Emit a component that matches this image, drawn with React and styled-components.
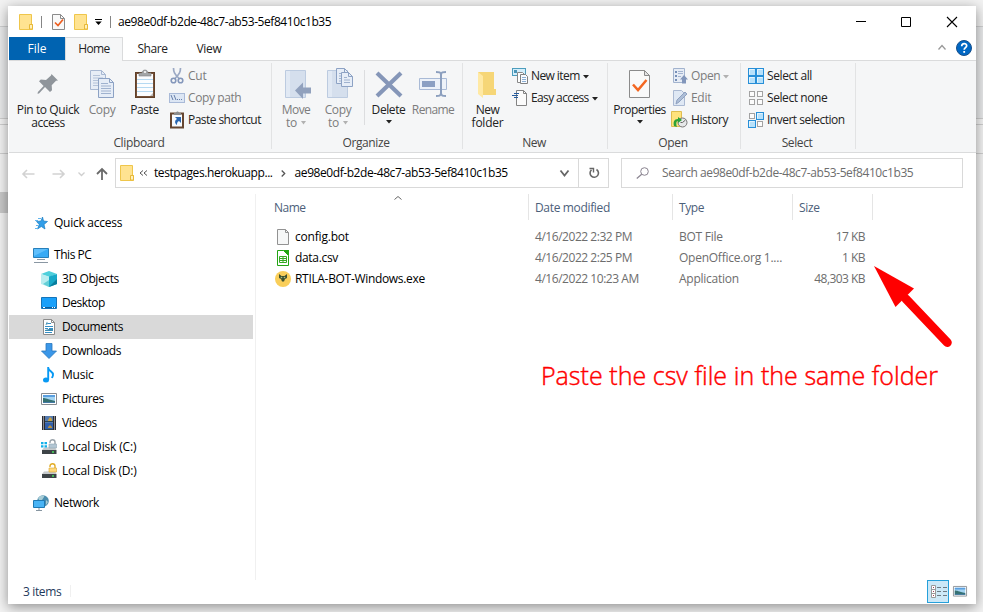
import React from 'react';
import styled, { createGlobalStyle } from 'styled-components';

const GlobalStyle = createGlobalStyle`
  *, *::before, *::after { box-sizing: border-box; }
  html, body { margin: 0; padding: 0; overflow: hidden; }
  body { font-family: "Open Sans", "Noto Sans", sans-serif; font-size: 12px; line-height: 13px; color: #000; }
  svg { display: block; flex: none; overflow: visible; }
`;

/* ---------- frame ---------- */
const Desktop = styled.div`
  width: 983px;
  height: 612px;
  padding: 6px 7px 8px 8px;
  overflow: hidden;
  background:
    linear-gradient(#c9c9c9, #c9c9c9) 0 192px / 8px 21px no-repeat,
    linear-gradient(#f2f2f2 0 26px, #cfd0d1 26px 27px, #e9eaeb 27px 118px, #cfcfcf 118px 119px,
      #f4f4f4 119px 124px, #cfcfcf 124px 125px, #f3f3f3 125px 153px, #cfcfcf 153px 154px, #f3f3f3 154px);
`;
const Window = styled.div`
  width: 968px;
  height: 598px;
  padding-left: 1px;
  display: flex;
  flex-direction: column;
  background: #fff;
  box-shadow: 0 3px 12px rgba(0, 0, 0, 0.42);
`;
const Text = styled.span`
  white-space: nowrap;
  letter-spacing: ${(p) => p.$ls ?? -0.36}px;
`;

/* ---------- title bar ---------- */
const TitleBar = styled.header`
  height: 31px;
  display: flex;
  align-items: center;
`;
const QuickTools = styled.div`
  width: 109px;
  height: 31px;
  padding-left: 8px;
  display: flex;
  align-items: center;
`;
const ToolSlot = styled.div`
  width: ${(p) => p.$w}px;
  display: flex;
  justify-content: center;
`;
const Bar = styled.i`
  width: 1px;
  height: 12px;
  background: #858585;
`;
const WindowButtons = styled.div`
  margin-left: auto;
  display: flex;
`;
const WindowButton = styled.button`
  width: ${(p) => p.$w ?? 46}px;
  height: 30px;
  padding: 0;
  border: 0;
  background: none;
  display: flex;
  align-items: center;
  justify-content: center;
`;

/* ---------- tabs ---------- */
const Tabs = styled.nav`
  height: 24px;
  display: flex;
  border-bottom: 1px solid #dadbdc;
`;
const Tab = styled.div`
  width: ${(p) => p.$w}px;
  height: ${(p) => (p.$active ? 24 : 23)}px;
  display: flex;
  align-items: center;
  justify-content: center;
  padding-bottom: ${(p) => (p.$active ? 2 : 0)}px;
  color: ${(p) => (p.$file ? '#fff' : '#222')};
  background: ${(p) => (p.$file ? '#0063b1' : p.$active ? '#f5f6f7' : 'transparent')};
  border: ${(p) => (p.$active ? '1px solid #dadbdc' : '0')};
  border-bottom: 0;
`;
const TabTools = styled.div`
  margin-left: auto;
  padding: 0 4px 2px 0;
  display: flex;
  align-items: center;
  gap: 10px;
`;

/* ---------- ribbon ---------- */
const Ribbon = styled.section`
  height: 92px;
  display: flex;
  background: #f5f6f7;
  border-bottom: 1px solid #dadbdc;
`;
const Group = styled.div`
  width: ${(p) => p.$w}px;
  display: flex;
  flex-direction: column;
  background: linear-gradient(#e2e3e4, #e2e3e4) right 2px / 1px 86px no-repeat;
`;
const GroupBody = styled.div`
  height: 75px;
  padding-left: ${(p) => p.$pad}px;
  display: flex;
`;
const GroupLabel = styled.div`
  height: 14px;
  padding-right: 3px;
  text-align: center;
  color: #444;
`;
const BigButtonBox = styled.div`
  width: ${(p) => p.$w}px;
  padding-top: 8px;
  display: flex;
  flex-direction: column;
  align-items: center;
  text-align: center;
  color: ${(p) => (p.$off ? '#7c7c7c' : '#222')};
  svg:first-child { margin-bottom: 2px; }
`;
const Line = styled.div`
  height: 13px;
  display: flex;
  align-items: center;
  gap: 4px;
`;
const SmallColumn = styled.div`
  padding: 4px 0 0 ${(p) => p.$pad}px;
  display: flex;
  flex-direction: column;
`;
const SmallButton = styled.div`
  height: 22px;
  display: flex;
  align-items: center;
  gap: ${(p) => p.$gap ?? 3}px;
  color: ${(p) => (p.$off ? '#7c7c7c' : '#222')};
  ${Text} { padding-bottom: 1px; }
`;
const InnerDivider = styled.i`
  width: 1px;
  height: 55px;
  margin: 9px 2px 0 5px;
  background: #dcdddf;
`;

/* ---------- address row ---------- */
const NavRow = styled.div`
  height: 41px;
  padding: 5px 0 0 13px;
  display: flex;
`;
const NavArrows = styled.div`
  width: 93px;
  height: 31px;
  display: grid;
  grid-template-columns: 16px 14px 16px 10px 8px 10px 12px;
  align-items: center;
`;
const Address = styled.div`
  width: 494px;
  height: 30px;
  display: flex;
  align-items: center;
  border: 1px solid #d9d9d9;
`;
const Crumb = styled.div`
  display: flex;
  align-items: center;
  padding-left: ${(p) => p.$pad}px;
  ${Text} { padding-bottom: 1px; }
`;
const AddressEnd = styled.div`
  margin-left: auto;
  height: 28px;
  display: flex;
  align-items: center;
`;
const Refresh = styled.div`
  width: 30px;
  height: 28px;
  margin-left: 9px;
  border-left: 1px solid #d9d9d9;
  display: flex;
  align-items: center;
  justify-content: center;
`;
const Search = styled.div`
  width: 342px;
  height: 30px;
  margin-left: 12px;
  padding-left: 14px;
  display: flex;
  align-items: center;
  gap: 13px;
  border: 1px solid #d9d9d9;
  color: #6d6d6d;
  ${Text} { padding-bottom: 1px; }
`;

/* ---------- content ---------- */
const Main = styled.div`
  height: 386px;
  display: flex;
`;
const Sidebar = styled.aside`
  width: 247px;
  padding-top: 17px;
  border-right: 1px solid #f0f0f0;
`;
const TreeItem = styled.div`
  width: 244px;
  height: 24px;
  margin-top: ${(p) => p.$gap ?? 0}px;
  padding-left: ${(p) => (p.$root ? 24 : 32)}px;
  display: flex;
  align-items: center;
  gap: 5px;
  background: ${(p) => (p.$active ? '#d9d9d9' : 'transparent')};
  ${Text} { padding-bottom: 1px; }
`;
const Files = styled.main`
  flex: 1;
`;
const HeaderRow = styled.div`
  height: 32px;
  display: flex;
  color: #4c607a;
`;
const HeaderCell = styled.div`
  width: ${(p) => p.$w}px;
  height: 26px;
  padding-left: ${(p) => p.$pad}px;
  padding-top: 1px;
  display: flex;
  align-items: center;
  border-right: 1px solid #e5e5e5;
`;
const SortMark = styled.span`
  margin: -20px 0 0 88px;
`;
const FileRow = styled.div`
  height: 21px;
  display: grid;
  grid-template-columns: 39px 240px 144px 115px 71px;
  align-items: center;
  color: #6d6d6d;
`;
const FileIcon = styled.span`
  padding-left: 19px;
`;
const FileName = styled.span`
  color: #000;
`;
const Size = styled.span`
  text-align: right;
`;
const Note = styled.div`
  height: 132px;
  margin-top: -23px;
  display: grid;
  grid-template-columns: 618px 1fr;
  align-items: start;
`;
const NoteText = styled.div`
  margin: 94px 0 0 285px;
  width: 400px;
  font-size: 25px;
  line-height: 30px;
  font-weight: 300;
  word-spacing: 0.2px;
  color: #f00;
  -webkit-text-stroke: 0.45px #f00;
  white-space: nowrap;
`;
const StatusBar = styled.footer`
  height: 24px;
  padding: 0 9px 2px 14px;
  display: flex;
  align-items: center;
  color: #1e395b;
`;
const StatusCount = styled.div`
  width: 48px;
  height: 12px;
  line-height: 14px;
  border-right: 1px solid #f0f0f0;
`;
const Views = styled.div`
  margin-left: auto;
  display: flex;
  align-items: center;
  gap: 4px;
`;
const ViewActive = styled.div`
  width: 22px;
  height: 23px;
  padding: 4px 0 0 3px;
  background: #cce8f7;
  border: 1px solid #26a0da;
`;

/* ---------- icons ---------- */
const Svg = ({ w = 16, h = w, children, ...rest }) => (
  <svg width={w} height={h} viewBox={`0 0 ${w} ${h}`} fill="none" {...rest}>{children}</svg>
);
const Folder = () => (
  <Svg w={14} h={16}>
    <path d="M.5.5h12v10h1v5H.5z" fill="#ffe391" stroke="#efc64b" />
    <path d="M10.500 15v-4.500h3V15z" fill="#fff0bd" stroke="#e8b938" />
  </Svg>
);
const Caret = ({ color = '#222', w = 6 }) => (
  <Svg w={w} h={3}><path d={`M0 0h${w}L${w / 2} 3.500z`} fill={color} /></Svg>
);
const CheckDoc = () => (
  <Svg w={13} h={16}>
    <path d="M.5.5h8l4 4v11H.5z" fill="#f9f9f9" stroke="#8b8b8b" />
    <path d="M8.500.5v4h4" stroke="#8b8b8b" />
    <path d="m3 8.500 3 3 5-6" stroke="#ed5f20" strokeWidth="1.700" />
  </Svg>
);
const Customize = () => (
  <Svg w={7} h={6}><path d="M0 .5h7" stroke="#000" /><path d="M.3 2.500h6.400L3.500 6z" fill="#000" /></Svg>
);
const Pin = () => (
  <Svg w={32}>
    <path transform="translate(1)" d="M18.500 5 25 11.500l-2 .2-4.300 4.500.3 5-2 1.800-5-5L6 24.500l-1.500.3.400-1.700 5.700-6-4.600-4.800 1.800-1.800 5.200.4L18 6.500z" fill="#8f959b" />
  </Svg>
);
const PageShape = ({ x, y, w = 15, h = 19, c = '#8da2c4', f = '#e6edf7' }) => (
  <g transform={`translate(${x} ${y})`}>
    <path d={`M.5.5h${w - 5}l4 4v${h - 5}H.5z`} fill={f} stroke={c} />
    <path d={`M${w - 4.5}.5v4h4`} stroke={c} />
    {Array.from({ length: Math.floor((h - 6) / 2.5) }, (_, i) => (
      <path key={i} d={`M3 ${5.5 + i * 2.5}h${i ? w - 6 : w - 9}`} stroke={c} strokeWidth=".8" />
    ))}
  </g>
);
const CopyIcon = () => (
  <Svg w={32}><PageShape x={4} y={1} w={16} h={20} c="#a8b8d2" f="#e7edf6" /><PageShape x={12} y={9} w={16} h={20} /></Svg>
);
const PasteIcon = () => (
  <Svg w={32}>
    <rect x="6.500" y="3.500" width="19" height="25" fill="#755138" stroke="#604029" />
    <path d="M8 5h16v22H8z" fill="#fbfdff" />
    <path d="M8 10.500h16M8 14.500h16M8 18.500h16M8 22.500h16" stroke="#b5d9f2" />
    <path d="M21 27h3v-3z" fill="#bbb" />
    <path d="M10 7V4h3c0-4 6-4 6 0h3v3z" fill="#a3a5a7" stroke="#7f8183" strokeWidth=".6" />
    <circle cx="16" cy="3" r="1" fill="#fff" />
  </Svg>
);
const Cut = () => (
  <Svg>
    <path d="M4.500 0c0 4 1 6 6 11M11.500 0c0 4-1 6-6 11" stroke="#9ba9c4" strokeWidth="1.700" />
    <circle cx="4.500" cy="12.500" r="2.300" stroke="#8497bb" strokeWidth="1.600" />
    <circle cx="11.500" cy="12.500" r="2.300" stroke="#8497bb" strokeWidth="1.600" />
  </Svg>
);
const CopyPath = () => (
  <Svg>
    <rect x=".5" y="3.500" width="15" height="9" fill="#dce6f4" stroke="#a9bad8" />
    <path d="m2 5 2 5m1-5 2 5" stroke="#657eaa" />
    <path d="M8 9.500h1m1 0h1m1 0h1" stroke="#657eaa" />
  </Svg>
);
const PasteShortcut = () => (
  <Svg>
    <path d="M2 1.500h12v14H2z" fill="#f8fbfe" stroke="#664631" strokeWidth="2" />
    <path d="M5 3V1h2c0-2 3-2 3 0h2v2z" fill="#8a8c8e" />
    <path d="M6 5h6v6l-2-2c-2 1-2 2-2 4-3-2-2-5 0-6z" fill="#2a66b0" />
  </Svg>
);
const BoxTo = ({ copy }) => (
  <Svg w={32}>
    <path d="M5.500 1.500h20v27h-20z" fill="#d5dfed" stroke="#bccbe0" />
    <path d="M6 2h4v26H6z" fill="#e1e9f4" />
    {copy
      ? <><PageShape x={14} y={-1} w={13} h={16} /><PageShape x={19} y={3} w={12} h={15} /></>
      : <path d="m15 21.500 8-8v5h8v6h-8v5.500z" fill="#91a1bd" />}
  </Svg>
);
const DeleteIcon = () => (
  <Svg w={32}><path d="m4 4 24 23M28 4 4 27" stroke="#8596b8" strokeWidth="4.200" /></Svg>
);
const RenameIcon = () => (
  <Svg w={32}>
    <path d="M2.500 9.500h27v11h-27z" fill="#edf2f9" stroke="#a9bad6" />
    <path d="M5 12h13v6H5z" fill="#8ca0c3" />
    <path d="M24 4v22M19 3c3 0 5 0 5 3 0-3 2-3 5-3M19 27c3 0 5 0 5-3 0 3 2 3 5 3" stroke="#8c9fbe" strokeWidth="2" />
  </Svg>
);
const NewFolder = () => (
  <Svg w={32}>
    <path d="M6 3h16v17h2v6H11z" fill="#f6d677" />
    <path d="m6 3 5 4v22l-5-4z" fill="#ffe9a4" />
  </Svg>
);
const NewItem = () => (
  <Svg>
    <rect x=".5" y=".5" width="13" height="7" fill="#d4eefb" stroke="#4c9dbd" />
    <path d="M2 2h3v3H2z" fill="#4b94b6" />
    <path d="M5.500 4.500h5l3 3v7h-8z" fill="#fff" stroke="#888" />
    <path d="M8.500 6.500h5l2 2v7h-7z" fill="#f8fbff" stroke="#808080" />
    <path d="M10 9.500h4m-4 2h4m-4 2h4" stroke="#8aaed3" />
  </Svg>
);
const EasyAccess = () => (
  <Svg>
    <path d="M4.500.5h7l3 3v12h-10z" fill="#fbfbfb" stroke="#838383" />
    <path d="M11.500.5v3h3" stroke="#838383" />
    <path d="M2 3.500h5M0 5.500h6M2 7.500h4" stroke="#255b9c" />
  </Svg>
);
const Properties = () => (
  <Svg w={32}>
    <path d="M5.500 1.500h15l5 5v22h-20z" fill="#f9f9f9" stroke="#8b8b8b" />
    <path d="M20.500 1.500v5h5z" fill="#e3e3e3" stroke="#8b8b8b" />
    <path d="m9 15.500 5 5.500 8.500-10" stroke="#f36621" strokeWidth="2.500" />
  </Svg>
);
const OpenIcon = () => (
  <Svg>
    <path d="M1.500.5h11v14h-11z" fill="#e6ecf5" stroke="#a2b3ce" />
    <path d="M3 3h2v2H3zm0 4h2v2H3zm0 4h2v2H3z" fill="#768fb7" />
    <path d="M6 3.500h5M6 5.500h5M6 8.500h3" stroke="#a4b4d0" />
    <path d="M10 15.500v-4H8l4-4.500 4 4.500h-2v4z" fill="#8296bb" />
  </Svg>
);
const EditIcon = () => (
  <Svg>
    <path d="M1.500.5h8l3 3v12h-11z" fill="#dfe8f4" stroke="#aab9d2" />
    <path d="m4 14 1-4 8-8 2 2-8 8z" fill="#adbed7" stroke="#8fa1c0" />
  </Svg>
);
const HistoryIcon = () => (
  <Svg>
    <path d="M.5.5h10v10h1v5H.5z" transform="translate(-1 -1)" fill="#ffe27d" stroke="#dfbd50" />
    <circle cx="10.500" cy="10.500" r="4.500" fill="#e6e8e9" stroke="#777" />
    <path d="M10.500 10.500l3-2.500m-3 2.500h-2" stroke="#666" />
    <path d="M2 14c-1-4 0-7 4-7V5l4 3-4 3V9c-2 0-2 3-1 6z" fill="#2ca338" />
  </Svg>
);
const Squares = ({ on }) => (
  <Svg>
    {[[0, 0], [8, 0], [0, 8], [8, 8]].map(([x, y], i) => on[i]
      ? <g key={i}><rect x={x + .5} y={y + .5} width="7" height="7" fill="#b8e1fa" stroke="#278fd8" /><path d={`M${x + 1.5} ${y + 6.5}v-5h5`} stroke="#e4f4fd" /></g>
      : <rect key={i} x={x + 1.5} y={y + 1.5} width="5" height="5" fill="#fcfcfc" stroke="#a2a2a2" />)}
  </Svg>
);
const Help = () => (
  <Svg>
    <circle cx="8" cy="8" r="7.500" fill="#0067c4" stroke="#174f8b" />
    <path d="M5.700 6.200c0-3.700 5-3.200 5-.5 0 1.800-2.500 2-2.500 4" stroke="#fff" strokeWidth="1.700" />
    <path d="M7.300 11h1.800v1.800H7.300z" fill="#fff" />
  </Svg>
);
const Chevron = ({ w = 8, h = 5, color = '#555', up, sw = 1.3 }) => (
  <Svg w={w} h={h}><path d={up ? `M.5 ${h - .5} ${w / 2} .5l${w / 2 - .5} ${h - 1}` : `M.5.5l${w / 2 - .5} ${h - 1} ${w / 2 - .5}-${h - 1}`} stroke={color} strokeWidth={sw} /></Svg>
);
const ArrowH = ({ right }) => (
  <Svg w={13} h={10} transform={right ? 'scale(-1 1)' : undefined}><path d="M12.500 5H1m4-4L1 5l4 4" stroke="#d2d2d2" strokeWidth="1.600" /></Svg>
);
const ArrowUp = () => (
  <Svg w={12} h={12}><path d="M6 12V1M1 6l5-5 5 5" stroke="#6a6a6a" strokeWidth="1.800" /></Svg>
);
const RefreshIcon = () => (
  <Svg w={12} h={12}><path d="M8.500 2.500a4.200 4.200 0 1 1-5 .4" stroke="#666" strokeWidth="1.600" /><path d="M1.500 1.500h4v4" stroke="#666" strokeWidth="1.400" /></Svg>
);
const SearchIcon = () => (
  <Svg w={13} h={12}><circle cx="8.500" cy="4.500" r="3.800" stroke="#8a8490" /><path d="M5.700 7.200.8 11.500" stroke="#8a8490" strokeWidth="1.200" /></Svg>
);
const Star = () => (
  <Svg>
    <path d="m9.500 2 1 4 4 .5-3.500 3 1 4.500-3.700-2.500L4.500 14l1.700-4.500-2.700-3L8 6z" fill="#329ee8" stroke="#187dc3" strokeWidth=".7" />
    <path d="M2 5.500h3M3 10.500h2M2 13.500h3M5 3.500h3" stroke="#62b5ee" />
  </Svg>
);
const PC = () => (
  <Svg>
    <path d="M.5 1.500h15v9H.5z" fill="#38aaf5" stroke="#277fba" />
    <path d="M1 2h14L1 9z" fill="#70c8ff" opacity=".7" />
    <path d="M4 12.500h8M1 15.500h14" stroke="#8a97a3" />
  </Svg>
);
const Cube = () => (
  <Svg>
    <path d="m0 3 8-3 8 3-8 3z" fill="#4ecfdb" /><path d="M0 3 8 5.500V16l-8-3z" fill="#b9edf0" />
    <path d="m8 5.500 8-2.500v10l-8 3z" fill="#18a9c8" /><path d="m8 16 8-3V8z" fill="#087d9d" /><path d="m2 13 6-4v7z" fill="#64cfd7" />
  </Svg>
);
const DesktopIcon = () => (
  <Svg><path d="M.5 2.500h15v11H.5z" fill="#19a0fa" stroke="#1474ba" /><path d="M1 12.500h14" stroke="#0b5d9c" /><path d="M2 12.500h2m7 0h1m1 0h1" stroke="#fff" /></Svg>
);
const DocIcon = () => (
  <Svg>
    <path d="M2.500.5h8l3 3v12h-11z" fill="#fff" stroke="#8b8b8b" /><path d="M10.500.5v3h3" stroke="#8b8b8b" />
    <path d="M4 7.500h8M4 9.500h3m1 0h4M4 13.500h7M7 4.500h3" stroke="#358fc5" /><path d="M4.500 6 6 2.500 7 5zM8 10h4v2H4v-1z" fill="#3a8ab0" />
  </Svg>
);
const Down = () => (
  <Svg><path d="M5 .5h6v7.500h4.500L8 15.500.5 8H5z" fill="#3b97e8" stroke="#2877bd" strokeWidth=".8" /></Svg>
);
const Music = () => (
  <Svg><ellipse cx="5" cy="13" rx="3" ry="2.500" fill="#0899f3" /><path d="M7.200 13V0M7.200 1c1 4 5 3 4.800 7-.1 1.400-.8 2-1 3" stroke="#0899f3" strokeWidth="1.900" /></Svg>
);
const Picture = ({ w = 16 }) => (
  <Svg w={w} h={w * .75}>
    <g transform={`scale(${w / 16})`}>
      <path d="M.5.5h15v11H.5z" fill="#fff" stroke="#878b90" /><path d="M2 2h12v8H2z" fill="#a4d4f2" />
      <path d="M2 2h12v2H2z" fill="#5a9fe0" /><path d="M2 5c3 0 4 1 12 3v2H2z" fill="#367172" /><path d="M2 9h12v1H2z" fill="#447aa5" />
    </g>
  </Svg>
);
const Video = () => (
  <Svg>
    <path d="M1 1h14v14H1z" fill="#2c2c31" /><path d="M4 1h8v7H4z" fill="#547aaf" /><path d="M4 8h8v7H4z" fill="#315fab" />
    <path d="m7 5 2-3 2 2v2H7z" fill="#c9a143" /><path d="m7 12 2-2 2 2v1H7z" fill="#b9923e" />
    <path d="M4 6.500h8M4 14.500h8" stroke="#2b4554" />
    <path d="M2.500 1.500V15M13.500 1.500V15" stroke="#eee" strokeDasharray="1 1" />
  </Svg>
);
const Disk = ({ win }) => (
  <Svg>
    <path d="m3 8.500 11-.5 1.500 3H1z" fill="#c6cacc" /><path d="M1 11h14.500v4H1z" fill="#3d4347" /><path d="M11 13h2" stroke="#48dd5b" strokeWidth="1.500" />
    {win && <path d="M0 3h2.500v2.300H0zm3.500 0H6v2.300H3.500zM0 6.300h2.500v2.300H0zm3.500 0H6v2.300H3.500z" fill="#13b0e9" />}
    <path d="M9 4V3c0-3 5-3 5 0v3" stroke={win ? '#9aa3aa' : '#e2ac25'} strokeWidth="1.400" />
    <path d="M8 5h7.500v4H8z" fill={win ? '#b3c6d3' : '#ffd97c'} stroke={win ? '#8fa5b4' : '#d9a431'} strokeWidth=".6" />
  </Svg>
);
const Network = () => (
  <Svg>
    <circle cx="10" cy="6" r="5.800" fill="#4b8dae" /><path d="M5 3c3-3 7-3 6-1L9 5H6zm8 2 2 2-2 3z" fill="#a7ccd6" />
    <path d="M.5 5.500h11v7H.5z" fill="#49b4f5" stroke="#1e79b3" /><path d="M3 15.500h6M6 13v2" stroke="#8796a1" />
  </Svg>
);
const BlankFile = () => (
  <Svg><path d="M2.500.5h8l3 3v12h-11z" fill="#f6f7f7" stroke="#929292" /><path d="M10.500.5v3h3" stroke="#929292" /></Svg>
);
const CsvFile = () => (
  <Svg>
    <path d="M2.500.5h6l5 5v10h-11z" fill="#fff" stroke="#23a514" /><path d="M8 0h6v6z" fill="#23a514" />
    <path d="M4.500 6.500h7v6h-7zM4.500 8.500h7m-7 2h7m-3.500-4v6" stroke="#36a823" />
  </Svg>
);
const BotFile = () => (
  <Svg><circle cx="8" cy="8" r="8" fill="#f9ce5a" /><path d="m4 3 2.500 2h3L12 3v4l-2 1-1 2.500H7L6 8 4 7z" fill="#3f512e" /><circle cx="6.500" cy="6.500" r=".8" fill="#a8bf8b" /><circle cx="9.500" cy="6.500" r=".8" fill="#a8bf8b" /></Svg>
);
const DetailsView = () => (
  <Svg w={16} h={13}>
    <path d="M.5.500h4v12h-4zM.5 4.500h4m-4 4h4" fill="#fff" stroke="#999" />
    <path d="M2 2.500h1m-1 4h1m-1 4h1" stroke="#a33e5c" />
    <path d="M6 2.500h4m2 0h4m-10 4h4m2 0h4m-10 4h4m2 0h4" stroke="#6c7a83" />
  </Svg>
);
const RedArrow = () => (
  <Svg w={80} h={84}>
    <path d="m32 33 41.300 43.500" stroke="#f00" strokeWidth="9" strokeLinecap="round" />
    <path d="m0 0 40 22.500L21.500 41z" fill="#f00" />
  </Svg>
);

/* ---------- parts ---------- */
const BigButton = ({ w, off, icon, lines, caret, ls = [] }) => (
  <BigButtonBox $w={w} $off={off}>
    {icon}
    {lines.map((l, i) => (
      <Line key={l}>
        <Text $ls={ls[i]}>{l}</Text>
        {caret === 'inline' && i === lines.length - 1 && <Caret color="#b1b1b1" w={5} />}
      </Line>
    ))}
    {caret === 'below' && <Line><Caret /></Line>}
  </BigButtonBox>
);
const Small = ({ icon, off, children, ls, caret, gap }) => (
  <SmallButton $off={off} $gap={gap}>{icon}<Text $ls={ls}>{children}</Text>{caret && <Caret color={off ? '#b1b1b1' : '#222'} />}</SmallButton>
);

const TREE = [
  ['Quick access', <Star />, -0.26, { $root: true }],
  ['This PC', <PC />, -0.45, { $root: true, $gap: 8 }],
  ['3D Objects', <Cube />, -0.4],
  ['Desktop', <DesktopIcon />, -0.5],
  ['Documents', <DocIcon />, -0.36, { $active: true }],
  ['Downloads', <Down />, -0.4],
  ['Music', <Music />, -0.2],
  ['Pictures', <Picture />, -0.4],
  ['Videos', <Video />, -0.4],
  ['Local Disk (C:)', <Disk win />, -0.16],
  ['Local Disk (D:)', <Disk />, -0.22],
  ['Network', <Network />, -0.42, { $root: true, $gap: 8 }],
];
const FILES = [
  ['config.bot', <BlankFile />, -0.2, '4/16/2022 2:32 PM', 'BOT File', '17 KB'],
  ['data.csv', <CsvFile />, -0.33, '4/16/2022 2:25 PM', 'OpenOffice.org 1....', '1 KB'],
  ['RTILA-BOT-Windows.exe', <BotFile />, -0.32, '4/16/2022 10:23 AM', 'Application', '48,303 KB'],
];

export default function App() {
  return (
    <Desktop>
      <GlobalStyle />
      <Window>
        <TitleBar>
          <QuickTools>
            <ToolSlot $w={18}><Folder /></ToolSlot>
            <ToolSlot $w={12}><Bar /></ToolSlot>
            <ToolSlot $w={22}><CheckDoc /></ToolSlot>
            <ToolSlot $w={23}><Folder /></ToolSlot>
            <ToolSlot $w={13}><Customize /></ToolSlot>
            <ToolSlot $w={11}><Bar /></ToolSlot>
          </QuickTools>
          <Text $ls={-0.43}>ae98e0df-b2de-48c7-ab53-5ef8410c1b35</Text>
          <WindowButtons>
            <WindowButton $w={45}><Svg w={10} h={1}><path d="M0 .5h10" stroke="#000" /></Svg></WindowButton>
            <WindowButton $w={45}><Svg w={10}><path d="M.5.5h9v9h-9z" stroke="#000" /></Svg></WindowButton>
            <WindowButton $w={48}><Svg w={10}><path d="m0 0 10 10M10 0 0 10" stroke="#000" strokeWidth="1.100" /></Svg></WindowButton>
          </WindowButtons>
        </TitleBar>
        <Tabs>
          <Tab $w={56} $file><Text $ls={0}>File</Text></Tab>
          <Tab $w={58} $active><Text $ls={-0.65}>Home</Text></Tab>
          <Tab $w={59}><Text $ls={-0.42}>Share</Text></Tab>
          <Tab $w={54}><Text $ls={-0.3}>View</Text></Tab>
          <TabTools><Chevron up color="#999" /><Help /></TabTools>
        </Tabs>
        <Ribbon>
          <Group $w={263}>
            <GroupBody $pad={7}>
              <BigButton w={64} icon={<Pin />} lines={['Pin to Quick', 'access']} ls={[-0.4, -0.5]} />
              <BigButton w={44} off icon={<CopyIcon />} lines={['Copy']} />
              <BigButton w={41} icon={<PasteIcon />} lines={['Paste']} ls={[-0.45]} />
              <SmallColumn $pad={4}>
                <Small off icon={<Cut />} ls={-0.2}>Cut</Small>
                <Small off icon={<CopyPath />} ls={-0.4}>Copy path</Small>
                <Small icon={<PasteShortcut />} ls={-0.55}>Paste shortcut</Small>
              </SmallColumn>
            </GroupBody>
            <GroupLabel><Text $ls={-0.36}>Clipboard</Text></GroupLabel>
          </Group>
          <Group $w={191}>
            <GroupBody $pad={3}>
              <BigButton w={42} off icon={<BoxTo />} lines={['Move', 'to']} caret="inline" ls={[-0.55]} />
              <BigButton w={42} off icon={<BoxTo copy />} lines={['Copy', 'to']} caret="inline" />
              <InnerDivider />
              <BigButton w={43} icon={<DeleteIcon />} lines={['Delete']} caret="below" ls={[-0.4]} />
              <BigButton w={46} off icon={<RenameIcon />} lines={['Rename']} ls={[-0.62]} />
            </GroupBody>
            <GroupLabel><Text $ls={-0.4}>Organize</Text></GroupLabel>
          </Group>
          <Group $w={145}>
            <GroupBody $pad={3}>
              <BigButton w={43} icon={<NewFolder />} lines={['New', 'folder']} ls={[-0.6, -0.25]} />
              <SmallColumn $pad={3}>
                <Small icon={<NewItem />} caret ls={-0.58}>New item</Small>
                <Small icon={<EasyAccess />} caret ls={-0.62}>Easy access</Small>
              </SmallColumn>
            </GroupBody>
            <GroupLabel><Text $ls={-0.6}>New</Text></GroupLabel>
          </Group>
          <Group $w={133}>
            <GroupBody $pad={2}>
              <BigButton w={59} icon={<Properties />} lines={['Properties']} caret="below" ls={[-0.56]} />
              <SmallColumn $pad={3}>
                <Small off icon={<OpenIcon />} caret gap={3} ls={-0.36}>Open</Small>
                <Small off icon={<EditIcon />} ls={-0.3}>Edit</Small>
                <Small icon={<HistoryIcon />} ls={-0.42}>History</Small>
              </SmallColumn>
            </GroupBody>
            <GroupLabel><Text>Open</Text></GroupLabel>
          </Group>
          <Group $w={115}>
            <GroupBody $pad={4}>
              <SmallColumn $pad={3}>
                <Small icon={<Squares on={[1, 1, 1, 1]} />} ls={-0.4}>Select all</Small>
                <Small icon={<Squares on={[0, 0, 0, 0]} />} ls={-0.42}>Select none</Small>
                <Small icon={<Squares on={[0, 1, 1, 0]} />} ls={-0.5}>Invert selection</Small>
              </SmallColumn>
            </GroupBody>
            <GroupLabel><Text $ls={-0.4}>Select</Text></GroupLabel>
          </Group>
        </Ribbon>
        <NavRow>
          <NavArrows>
            <ArrowH /><i /><ArrowH right /><i /><Chevron w={7} h={4} color="#cfcfcf" /><i /><ArrowUp />
          </NavArrows>
          <Address>
            <Crumb $pad={4}><Folder /></Crumb>
            <Crumb $pad={5}><Svg w={9} h={6}><path d="m4 .5-3 2.500 3 2.500M8 .5 5 3l3 2.500" stroke="#555" /></Svg></Crumb>
            <Crumb $pad={6}><Text $ls={-0.42}>testpages.herokuapp...</Text></Crumb>
            <Crumb $pad={8}><Svg w={5} h={7}><path d="m.7.5 3 3-3 3" stroke="#555" strokeWidth="1.300" /></Svg></Crumb>
            <Crumb $pad={9}><Text $ls={-0.43}>ae98e0df-b2de-48c7-ab53-5ef8410c1b35</Text></Crumb>
            <AddressEnd><Chevron w={9} h={6} sw={1.8} color="#666" /><Refresh><RefreshIcon /></Refresh></AddressEnd>
          </Address>
          <Search><SearchIcon /><Text $ls={-0.43}>Search ae98e0df-b2de-48c7-ab53-5ef8410c1b35</Text></Search>
        </NavRow>
        <Main>
          <Sidebar>
            {TREE.map(([label, icon, ls, props]) => (
              <TreeItem key={label} {...props}>{icon}<Text $ls={ls}>{label}</Text></TreeItem>
            ))}
          </Sidebar>
          <Files>
            <HeaderRow>
              <HeaderCell $w={273} $pad={18}><Text $ls={-0.5}>Name</Text><SortMark><Chevron up w={8} h={4} color="#666" sw={1} /></SortMark></HeaderCell>
              <HeaderCell $w={144} $pad={6}><Text $ls={-0.34}>Date modified</Text></HeaderCell>
              <HeaderCell $w={120} $pad={6}><Text $ls={-0.4}>Type</Text></HeaderCell>
              <HeaderCell $w={80} $pad={6}><Text $ls={-0.3}>Size</Text></HeaderCell>
            </HeaderRow>
            {FILES.map(([name, icon, ls, date, type, size]) => (
              <FileRow key={name}>
                <FileIcon>{icon}</FileIcon>
                <FileName><Text $ls={ls}>{name}</Text></FileName>
                <Text $ls={-0.46}>{date}</Text>
                <Text $ls={-0.25}>{type}</Text>
                <Size><Text $ls={-0.55}>{size}</Text></Size>
              </FileRow>
            ))}
            <Note><NoteText>Paste the csv file in the same folder</NoteText><RedArrow /></Note>
          </Files>
        </Main>
        <StatusBar>
          <StatusCount><Text $ls={-0.36}>3 items</Text></StatusCount>
          <Views><ViewActive><DetailsView /></ViewActive><Picture w={14} /></Views>
        </StatusBar>
      </Window>
    </Desktop>
  );
}
